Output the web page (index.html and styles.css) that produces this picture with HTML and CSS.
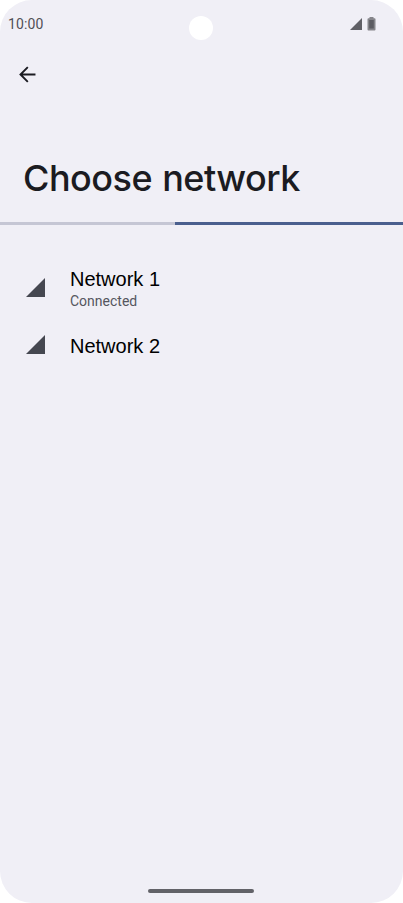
FILE: index.html
```html
<!DOCTYPE html>
<html lang="en">
<head>
<meta charset="utf-8">
<title>Choose network</title>
<link rel="stylesheet" href="styles.css">
</head>
<body>
<div class="phone">
  <header class="status">
    <span class="time">10:00</span>
    <span class="camera"></span>
    <span class="indicators">
      <svg class="signal-small" viewBox="0 0 12 12"><path d="M0 12L12 0V12Z"/></svg>
      <svg class="battery" viewBox="0 0 9 14"><path class="shell" d="M2.500 1.200V0H6.500V1.200H7.500Q8.500 1.200 8.500 2.200V12.500Q8.500 13.500 7.500 13.500H1.500Q.5 13.500 .5 12.500V2.200Q.5 1.200 1.500 1.200Z"/><path class="charge" d="M2.200 3H6.800V11.500H2.200Z"/></svg>
    </span>
  </header>
  <nav class="toolbar">
    <svg class="back" viewBox="0 0 16 16"><path d="M15.500 8H1.600M8.300 1.100L1.400 8L8.300 14.900"/></svg>
  </nav>
  <h1 class="title">Choose network</h1>
  <div class="progress"><div class="progress-bar"></div></div>
  <main class="networks">
    <div class="network">
      <svg class="signal" viewBox="0 0 20 20"><path d="M0 20L20 0V20Z"/></svg>
      <div class="label"><div class="name">Network 1</div><div class="state">Connected</div></div>
    </div>
    <div class="network">
      <svg class="signal" viewBox="0 0 20 20"><path d="M0 20L20 0V20Z"/></svg>
      <div class="label"><div class="name">Network 2</div></div>
    </div>
  </main>
  <div class="home-handle"></div>
</div>
</body>
</html>
```
FILE: styles.css
```css
* { box-sizing: border-box; }
body { margin: 0; background: #fff; }
svg { display: block; flex: none; }
.phone {
  display: flex;
  flex-direction: column;
  width: 403px;
  height: 903px;
  border-radius: 32px;
  background: #f0eff6;
  color: #1b1b21;
  font-family: Roboto, sans-serif;
  overflow: hidden;
}
.status {
  display: grid;
  grid-template-columns: 181px 24px 1fr;
  align-items: center;
  height: 48px;
  padding: 0 27px 0 8px;
}
.time { font-size: 14px; font-weight: 400; line-height: 16px; letter-spacing: 0.1px; color: #505056; }
.camera { width: 24px; height: 24px; margin-top: 7px; border-radius: 50%; background: #fff; }
.indicators { display: flex; align-items: center; justify-content: flex-end; gap: 5px; }
.signal-small { width: 12px; height: 12px; margin-top: -1px; fill: #606066; }
.battery { width: 9px; height: 14px; margin-top: -1px; }
.shell { fill: #85858a; }
.charge { fill: #5c5c62; }
.toolbar { height: 102px; padding: 18px 0 0 19px; }
.back { width: 17px; height: 17px; fill: none; stroke: #1b1b21; stroke-width: 1.800; }
.title {
  height: 72px;
  margin: 0;
  padding: 7px 0 0 23px;
  font-family: Inter, sans-serif;
  font-size: 36px;
  font-weight: 500;
  line-height: 43px;
  letter-spacing: -0.5px;
  word-spacing: 1px;
  white-space: nowrap;
}
.progress { height: 3px; background: #c5c6d4; }
.progress-bar { width: 228px; height: 3px; margin-left: auto; background: #4a5f8e; }
.networks { flex: 1; padding: 42px 25px 0 26px; }
.network { display: flex; gap: 25px; height: 67px; }
.network + .network { height: 60px; }
.signal { width: 19px; height: 19px; margin-top: 10.5px; fill: #454750; }
.network + .network .signal { margin-top: 1px; }
.name { font: 20px/24px "Liberation Sans", sans-serif; color: #000; }
.state { font-size: 14px; line-height: 20px; color: #55565e; }
.home-handle { width: 106px; height: 4px; margin: 0 0 10px 148px; border-radius: 2px; background: #626268; }
```
